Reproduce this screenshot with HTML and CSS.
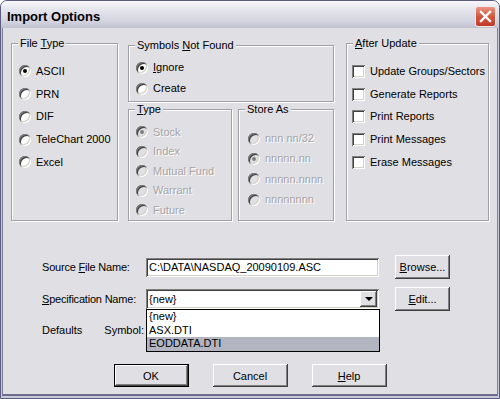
FILE: index.html
```html
<!DOCTYPE html>
<html>
<head>
    <title>Import Options</title>
    <meta charset="utf-8">
    <link rel="stylesheet" href="styles.css">
</head>
<body>
    <div class="window">
        <div class="titlebar">
            <span class="title">Import Options</span>
            <span class="close">
                <svg width="19" height="19" viewBox="0 0 19 19">
                    <path d="M5 5 L14 14 M14 5 L5 14" stroke="#fff" stroke-width="2.4" stroke-linecap="square"/>
                </svg>
            </span>
        </div>

        <div class="client">
            <div class="groups">
                <div class="group file-type">
                    <div class="group-title">File <u>T</u>ype</div>
                    <div class="opts wide">
                        <div class="opt"><span class="radio on"></span>ASCII</div>
                        <div class="opt"><span class="radio"></span>PRN</div>
                        <div class="opt"><span class="radio"></span>DIF</div>
                        <div class="opt"><span class="radio"></span>TeleChart 2000</div>
                        <div class="opt"><span class="radio"></span>Excel</div>
                    </div>
                </div>

                <div class="mid">
                    <div class="group symbols">
                        <div class="group-title">Symbols <u>N</u>ot Found</div>
                        <div class="opts">
                            <div class="opt"><span class="radio on"></span><span><u>I</u>gnore</span></div>
                            <div class="opt"><span class="radio"></span>Create</div>
                        </div>
                    </div>
                    <div class="mid-row">
                        <div class="group type disabled">
                            <div class="group-title"><u>T</u>ype</div>
                            <div class="opts">
                                <div class="opt"><span class="radio on"></span>Stock</div>
                                <div class="opt"><span class="radio"></span>Index</div>
                                <div class="opt"><span class="radio"></span>Mutual Fund</div>
                                <div class="opt"><span class="radio"></span>Warrant</div>
                                <div class="opt"><span class="radio"></span>Future</div>
                            </div>
                        </div>
                        <div class="group store-as disabled">
                            <div class="group-title">Store As</div>
                            <div class="opts">
                                <div class="opt"><span class="radio"></span>nnn nn/32</div>
                                <div class="opt"><span class="radio on"></span>nnnnn.nn</div>
                                <div class="opt"><span class="radio"></span>nnnnn.nnnn</div>
                                <div class="opt"><span class="radio"></span>nnnnnnnn</div>
                            </div>
                        </div>
                    </div>
                </div>

                <div class="group after">
                    <div class="group-title"><u>A</u>fter Update</div>
                    <div class="opts wide">
                        <div class="opt"><span class="check"></span>Update Groups/Sectors</div>
                        <div class="opt"><span class="check"></span>Generate Reports</div>
                        <div class="opt"><span class="check"></span>Print Reports</div>
                        <div class="opt"><span class="check"></span>Print Messages</div>
                        <div class="opt"><span class="check"></span>Erase Messages</div>
                    </div>
                </div>
            </div>

            <div class="fields">
                <span class="field-label">Source <u>F</u>ile Name:</span>
                <div class="textbox">C:\DATA\NASDAQ_20090109.ASC</div>
                <button class="btn"><u>B</u>rowse...</button>

                <span class="field-label"><u>S</u>pecification Name:</span>
                <div class="textbox combo">
                    <span>{new}</span>
                    <span class="drop-btn"><span class="arrow"></span></span>
                </div>
                <button class="btn"><u>E</u>dit...</button>

                <div class="defaults">
                    <span>Defaults</span>
                    <span class="symbol">Symbol:</span>
                </div>

                <div class="droplist">
                    <div class="drop-item">{new}</div>
                    <div class="drop-item">ASX.DTI</div>
                    <div class="drop-item selected">EODDATA.DTI</div>
                </div>
            </div>

            <div class="buttons">
                <button class="btn big default">OK</button>
                <button class="btn big">Cancel</button>
                <button class="btn big"><u>H</u>elp</button>
            </div>
        </div>
    </div>
</body>
</html>
```

FILE: styles.css
```css
body {
    margin: 0;
    font-family: "Liberation Sans", Arial, sans-serif;
    font-size: 11px;
    color: #000;
    background-color: #ffffff;
}

.window {
    width: 500px;
    height: 399px;
    box-sizing: border-box;
    border: 1px solid #5c5c80;
    border-radius: 7px 7px 0 0;
    background-color: #c9c9d8;
    display: flex;
    flex-direction: column;
    overflow: hidden;
}

.titlebar {
    height: 27px;
    flex: none;
    display: flex;
    align-items: center;
    justify-content: space-between;
    padding: 0 3px 0 6px;
    background: linear-gradient(#f7f7fb, #e6e6ee 30%, #d4d4e0 75%, #c0c0d0);
}

.title {
    font-weight: bold;
    font-size: 13px;
    padding-top: 3px;
}

.close {
    width: 21px;
    height: 21px;
    margin-top: 3px;
    box-sizing: border-box;
    border: 1px solid #f4e8e6;
    border-radius: 3px;
    background: linear-gradient(#ea9484, #d4563f 50%, #c03a28);
    display: flex;
    align-items: center;
    justify-content: center;
}

.client {
    flex: 1;
    margin: 0 1px 2px;
    border: 1px solid #7c7c9a;
    border-top: none;
    border-bottom: 2px solid #6c6c8c;
    background-color: #e0dfe3;
    padding-top: 15px;
}

/* group boxes */
.groups {
    display: flex;
    height: 178px;
    padding-left: 8px;
}

.group {
    box-sizing: border-box;
    border: 1px solid #a0a0a8;
    box-shadow: inset 1px 1px 0 #fff, 1px 1px 0 #fff;
}

.group-title {
    display: table;
    margin: -7px 0 0 6px;
    padding: 0 2px;
    line-height: 13px;
    background-color: #e0dfe3;
}

.file-type {
    width: 107px;
}

.mid {
    width: 206px;
    margin-left: 10px;
    padding-top: 2px;
    display: flex;
    flex-direction: column;
}

.symbols {
    height: 58px;
}

.mid-row {
    display: flex;
    gap: 6px;
    margin-top: 7px;
    flex: 1;
}

.type {
    width: 104px;
}

.store-as {
    width: 96px;
}

.after {
    width: 143px;
    margin-left: 12px;
}

.opts {
    padding-left: 7px;
    margin-top: 5px;
}

.opt {
    height: 21px;
    display: flex;
    align-items: center;
    line-height: 13px;
    white-space: nowrap;
}

.wide {
    margin-top: 10px;
}

.wide .opt {
    height: 22.75px;
}

.type .opts {
    margin-top: 7px;
}

.type .opt {
    height: 19.5px;
}

.store-as .opts {
    margin-top: 13px;
    padding-left: 9px;
}

.store-as .opt {
    height: 20.33px;
}

.after .opts {
    padding-left: 5px;
}

.disabled .opt {
    color: #a4a4a8;
    text-shadow: 1px 1px 0 #fff;
}

/* radio and check boxes */
.radio {
    position: relative;
    flex: none;
    width: 12px;
    height: 12px;
    margin-right: 5px;
    border-radius: 50%;
    background-color: #fff;
    box-shadow: inset 1px 1px 0 #808080, inset -1px -1px 0 #fff,
        inset 2px 2px 0 #404040, inset -2px -2px 0 #d4d0c8;
}

.radio.on::after {
    content: "";
    position: absolute;
    left: 4px;
    top: 4px;
    width: 4px;
    height: 4px;
    border-radius: 50%;
    background-color: #000;
}

.disabled .radio {
    background-color: #e0dfe3;
}

.disabled .radio.on::after {
    background-color: #808080;
}

.check {
    flex: none;
    width: 13px;
    height: 13px;
    margin-right: 5px;
    background-color: #fff;
    box-shadow: inset 1px 1px 0 #808080, inset -1px -1px 0 #fff,
        inset 2px 2px 0 #404040, inset -2px -2px 0 #d4d0c8;
}

/* bottom fields */
.fields {
    position: relative;
    display: grid;
    grid-template-columns: 88px 233px 55px;
    grid-template-rows: 24px 24px 22px;
    column-gap: 16px;
    row-gap: 8px;
    align-items: center;
    padding-left: 39px;
    margin-top: 34px;
}

.field-label {
    white-space: nowrap;
    letter-spacing: -0.2px;
}

.textbox {
    height: 19px;
    box-sizing: border-box;
    padding: 3px 3px 0;
    line-height: 13px;
    background-color: #fff;
    white-space: nowrap;
    box-shadow: inset 1px 1px 0 #808080, inset -1px -1px 0 #fff,
        inset 2px 2px 0 #404040, inset -2px -2px 0 #d4d0c8;
}

.combo {
    height: 20px;
    padding: 2px 2px 0 3px;
    display: flex;
    justify-content: space-between;
}

.combo > span:first-child {
    padding-top: 2px;
}

.drop-btn {
    width: 17px;
    height: 16px;
    box-sizing: border-box;
    background-color: #e0dfe3;
    box-shadow: inset -1px -1px 0 #404040, inset 1px 1px 0 #fff,
        inset -2px -2px 0 #808080;
    display: flex;
    align-items: center;
    justify-content: center;
}

.arrow {
    width: 0;
    height: 0;
    border-left: 4px solid transparent;
    border-right: 4px solid transparent;
    border-top: 4px solid #000;
}

.defaults {
    grid-column: 1 / 3;
    display: flex;
}

.symbol {
    margin-left: 22px;
}

.droplist {
    position: absolute;
    left: 143px;
    top: 54px;
    width: 234px;
    box-sizing: border-box;
    border: 1px solid #000;
    background-color: #fff;
}

.drop-item {
    height: 13.5px;
    line-height: 13px;
    padding-left: 2px;
}

.drop-item.selected {
    background-color: #b2b4c0;
}

/* buttons */
.btn {
    font-family: "Liberation Sans", Arial, sans-serif;
    font-size: 11px;
    color: #000;
    height: 24px;
    padding: 0;
    border: none;
    background-color: #e0dfe3;
    box-shadow: inset -1px -1px 0 #404040, inset 1px 1px 0 #fff,
        inset -2px -2px 0 #808080;
}

.buttons {
    display: flex;
    justify-content: center;
    gap: 24px;
    margin-top: 23px;
}

.big {
    width: 75px;
    height: 23px;
}

.default {
    border: 1px solid #000;
}
```
